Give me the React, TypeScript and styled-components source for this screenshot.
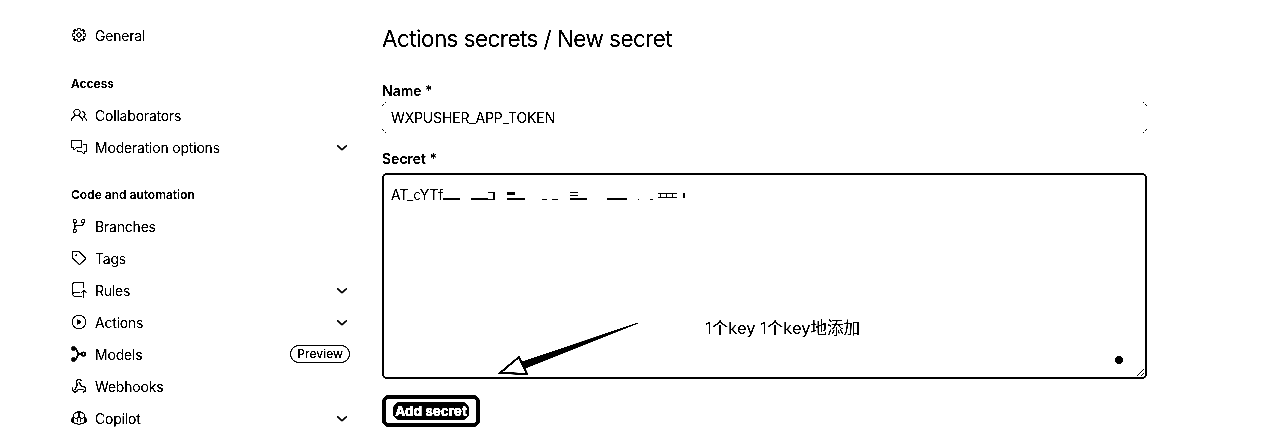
import React from "react";
import styled, { createGlobalStyle } from "styled-components";
import {
  GoGear, GoPeople, GoCommentDiscussion, GoGitBranch, GoTag, GoRepoPush,
  GoPlay, GoCopilot, GoChevronDown,
} from "react-icons/go";
import { Webhook } from "lucide-react";

const Global = createGlobalStyle`
  html, body { margin: 0; padding: 0; background: #fff; overflow: hidden; }
  body { font-family: Inter, "Noto Sans CJK SC", sans-serif; color: #000; }
`;

const Page = styled.div`
  width: 1280px;
  height: 440px;
  display: flex;
  padding-left: 71px;
  box-sizing: border-box;
  gap: 32px;
  background: #fff;
  overflow: hidden;
  filter: grayscale(1) brightness(0.9) contrast(6);
`;

const Sidebar = styled.nav`
  width: 279px;
  padding-top: 19px;
  display: flex;
  flex-direction: column;
  flex: none;
`;

const Row = styled.div`
  height: 32px;
  display: flex;
  align-items: center;
  gap: 8px;
  font-size: 14px;
  letter-spacing: -0.2px;
  color: #000;
  flex: none;
`;

const RowIcon = styled.span`
  width: 16px;
  height: 16px;
  display: flex;
  flex: none;
  svg { display: block; }
  svg:not([stroke]) { stroke: #000; stroke-width: 0.4px; }
`;

const RowLabel = styled.span`
  flex: 1;
`;

const Chevron = styled(GoChevronDown)`
  width: 16px;
  height: 16px;
  stroke: #000;
  stroke-width: 0.7px;
  margin-top: 1px;
  flex: none;
`;

const Badge = styled.span`
  font-size: 12px;
  font-weight: 500;
  letter-spacing: 0;
  line-height: 16px;
  height: 16px;
  padding: 0 6px;
  border: 1.5px solid #000;
  border-radius: 10px;
`;

const SectionTitle = styled.div<{ $gap: number }>`
  font-size: 12px;
  font-weight: 600;
  height: 32px;
  display: flex;
  align-items: center;
  margin-top: ${(p) => p.$gap}px;
  flex: none;
`;

const Main = styled.main`
  width: 765px;
  flex: none;
  display: flex;
  flex-direction: column;
  position: relative;
`;

const Title = styled.h1`
  font-size: 22.5px;
  font-weight: 400;
  letter-spacing: -0.56px;
  line-height: 32px;
  margin: 23px 0 0;
`;

const Label = styled.label<{ $top: number }>`
  font-size: 14px;
  font-weight: 600;
  line-height: 18px;
  margin-top: ${(p) => p.$top}px;
`;

const NameWrap = styled.div`
  position: relative;
  height: 34px;
`;

const NameInput = styled.input`
  width: 100%;
  height: 100%;
  box-sizing: border-box;
  border: 0;
  outline: 0;
  padding: 1px 9px 0;
  font: 400 14px Inter, sans-serif;
  letter-spacing: -0.15px;
  color: #000;
  background: transparent;
`;

const Corner = styled.svg<{ $x: "left" | "right"; $y: "top" | "bottom" }>`
  position: absolute;
  width: 5px;
  height: 5px;
  fill: #000;
  ${(p) => p.$x}: 0;
  ${(p) => p.$y}: ${(p) => (p.$y === "top" ? 2 : 1)}px;
  transform: ${(p) => `scale(${p.$x === "left" ? 1 : -1}, ${p.$y === "top" ? 1 : -1})`};
`;

const SecretWrap = styled.div`
  position: relative;
  height: 206px;
  margin-top: 5px;
`;

const SecretArea = styled.textarea`
  display: block;
  width: 100%;
  height: 100%;
  box-sizing: border-box;
  border: 2px solid #000;
  border-radius: 5px;
  outline: 0;
  padding: 11px 7px 6px;
  font: 400 14px Inter, sans-serif;
  letter-spacing: -0.3px;
  color: #000;
  background: #fff;
  resize: vertical;
  overflow: hidden;
`;

const Redaction = styled.svg`
  position: absolute;
  left: 60px;
  top: 15px;
  width: 250px;
  height: 15px;
`;

const Arrow = styled.svg`
  position: absolute;
  left: 110px;
  top: 145px;
  width: 150px;
  height: 60px;
`;

const Note = styled.span`
  position: absolute;
  left: 323px;
  top: 144px;
  font: 400 16.5px/22px Inter, "Noto Sans CJK SC", sans-serif;
  white-space: nowrap;
`;

const Dot = styled.span`
  position: absolute;
  left: 733px;
  top: 183px;
  width: 8px;
  height: 8px;
  border-radius: 50%;
  background: #000;
`;

const SubmitButton = styled.button`
  align-self: flex-start;
  margin-top: 16px;
  width: 98px;
  height: 32px;
  box-sizing: border-box;
  border: 4px solid #000;
  border-radius: 7px;
  background: #fff;
  padding: 0;
  display: flex;
  align-items: center;
  justify-content: center;
`;

const SubmitText = styled.span`
  color: #fff;
  font: 700 13.5px/16px Inter, sans-serif;
  white-space: nowrap;
  background: #000;
  padding: 0 1px;
  border-radius: 6px;
  -webkit-text-stroke: 0.6px #fff;
  box-shadow: 0 0 0 1px #000;
`;

const items = {
  top: [{ icon: <GoGear size={16} />, label: "General" }],
  access: [
    { icon: <GoPeople size={16} />, label: "Collaborators" },
    { icon: <GoCommentDiscussion size={16} />, label: "Moderation options", more: true },
  ],
  code: [
    { icon: <GoGitBranch size={16} />, label: "Branches" },
    { icon: <GoTag size={16} />, label: "Tags" },
    { icon: <GoRepoPush size={16} />, label: "Rules", more: true },
    { icon: <GoPlay size={16} />, label: "Actions", more: true },
    {
      icon: (
        <svg width="16" height="16" viewBox="0 0 16 16" fill="none" stroke="#000" strokeWidth="1.6">
          <rect x="1" y="1" width="3" height="3" fill="#000" strokeWidth="1" />
          <rect x="1" y="12" width="3" height="3" fill="#000" strokeWidth="1" />
          <path d="M3 3 H5 L7.5 8 L5 13 H3 M7.5 8 H10" />
          <circle cx="12.5" cy="8" r="1.75" />
        </svg>
      ),
      label: "Models",
      badge: "Preview",
    },
    { icon: <Webhook size={16} strokeWidth={2} />, label: "Webhooks" },
    { icon: <GoCopilot size={16} />, label: "Copilot", more: true },
  ],
};

type Item = { icon: React.ReactNode; label: string; more?: boolean; badge?: string };

const NavRow = ({ item }: { item: Item }) => (
  <Row>
    <RowIcon>{item.icon}</RowIcon>
    <RowLabel>{item.label}</RowLabel>
    {item.more && <Chevron />}
    {item.badge && <Badge>{item.badge}</Badge>}
  </Row>
);

const cornerDots = (
  <>
    <rect x="3" y="0" width="1" height="1" />
    <rect x="1" y="2" width="1" height="1" />
    <rect x="0" y="3" width="1" height="1" />
  </>
);

const corners: ["left" | "right", "top" | "bottom"][] = [
  ["left", "top"],
  ["right", "top"],
  ["left", "bottom"],
  ["right", "bottom"],
];

const redactions = [
  [1, 10, 17, 2], [29, 10, 17, 2], [46, 4, 7, 1], [51, 4, 2, 8], [46, 11, 7, 1],
  [65, 4, 8, 3], [65, 10, 18, 2], [100, 11, 5, 1], [110, 11, 6, 1],
  [128, 4, 8, 1], [128, 7, 8, 1], [128, 10, 17, 2], [165, 10, 20, 2],
  [196, 11, 1, 1], [208, 11, 3, 1], [216, 5, 19, 1], [216, 9, 19, 1],
  [218, 5, 1, 5], [224, 5, 1, 5], [230, 5, 1, 5], [241, 5, 2, 5],
];

export default function App() {
  return (
    <Page>
      <Global />
      <Sidebar>
        {items.top.map((i) => <NavRow key={i.label} item={i} />)}
        <SectionTitle $gap={16}>Access</SectionTitle>
        {items.access.map((i) => <NavRow key={i.label} item={i} />)}
        <SectionTitle $gap={15}>Code and automation</SectionTitle>
        {items.code.map((i) => <NavRow key={i.label} item={i} />)}
      </Sidebar>
      <Main>
        <Title>Actions secrets / New secret</Title>
        <Label $top={27}>Name *</Label>
        <NameWrap>
          <NameInput readOnly value="WXPUSHER_APP_TOKEN" />
          {corners.map(([x, y]) => (
            <Corner key={x + y} $x={x} $y={y} viewBox="0 0 5 5">{cornerDots}</Corner>
          ))}
        </NameWrap>
        <Label $top={16}>Secret *</Label>
        <SecretWrap>
          <SecretArea readOnly value="AT_cYTf" />
          <Redaction viewBox="0 0 250 15">
            {redactions.map(([x, y, w, h]) => (
              <rect key={`${x}-${y}`} x={x} y={y} width={w} height={h} fill="#000" />
            ))}
          </Redaction>
          <Note>1个key 1个key地添加</Note>
          <Arrow viewBox="0 0 150 60">
            <path d="M146 4.5 L146 5.5 L32 51 L29 44 Z" fill="#000" />
            <path d="M8 55 L27 39 L35 56 Z" fill="#fff" stroke="#000" strokeWidth="2" />
          </Arrow>
          <Dot />
        </SecretWrap>
        <SubmitButton>
          <SubmitText>Add secret</SubmitText>
        </SubmitButton>
      </Main>
    </Page>
  );
}
